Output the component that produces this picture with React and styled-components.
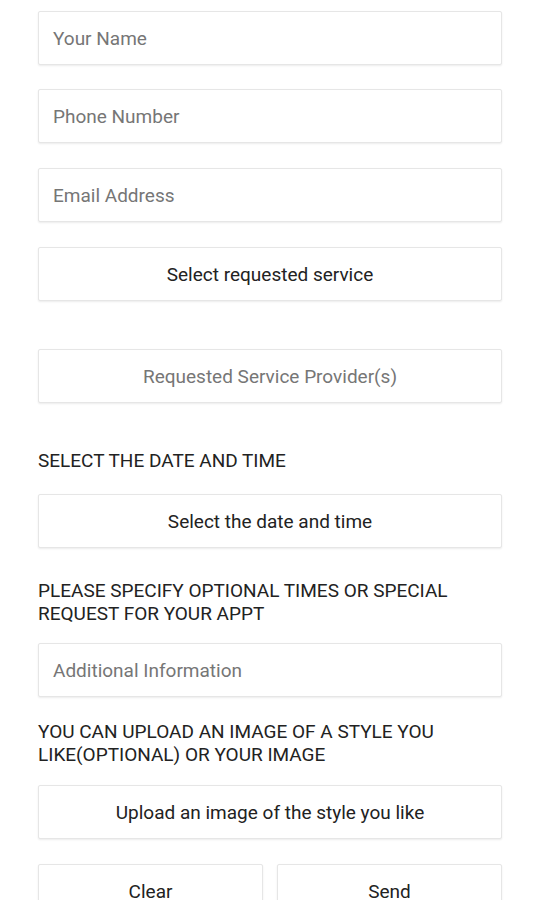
import React from "react";
import styled, { createGlobalStyle } from "styled-components";

const Global = createGlobalStyle`
  html, body { margin: 0; padding: 0; background: #ffffff; }
  body { font-family: Roboto, "Noto Sans", Arial, sans-serif; }
  * { box-sizing: border-box; }
`;

const Page = styled.div`
  width: 540px;
  height: 900px;
  overflow: hidden;
  padding: 11px 38px 0 38px;
  display: flex;
  flex-direction: column;
`;

const Field = styled.div`
  height: 54px;
  flex: ${(p) => (p.$grow ? "1" : "none")};
  margin-top: ${(p) => p.$mt || 0}px;
  border: 1px solid #e6e6e6;
  border-radius: 2px;
  box-shadow: 0 1px 2px rgba(0, 0, 0, 0.08);
  background: #fff;
  display: flex;
  align-items: center;
  justify-content: ${(p) => (p.$center ? "center" : "flex-start")};
  padding: 0 14px;
  font-size: 19px;
  color: ${(p) => (p.$muted ? "#767676" : "#222222")};
`;

const Label = styled.div`
  margin-top: ${(p) => p.$mt}px;
  margin-bottom: ${(p) => p.$mb}px;
  font-size: 19px;
  line-height: 23px;
  color: #222222;
  text-transform: uppercase;
`;

const ButtonRow = styled.div`
  display: flex;
  gap: 14px;
  margin-top: 25px;
`;

export default function App() {
  return (
    <>
      <Global />
      <Page>
        <Field $muted>Your Name</Field>
        <Field $muted $mt={24}>Phone Number</Field>
        <Field $muted $mt={25}>Email Address</Field>
        <Field $center $mt={25}>Select requested service</Field>
        <Field $center $muted $mt={48}>Requested Service Provider(s)</Field>
        <Label $mt={46} $mb={22}>Select the date and time</Label>
        <Field $center>Select the date and time</Field>
        <Label $mt={31} $mb={18}>
          Please specify optional times or special request for your appt
        </Label>
        <Field $muted>Additional Information</Field>
        <Label $mt={23} $mb={19}>
          You can upload an image of a style you like(optional) or your image
        </Label>
        <Field $center>Upload an image of the style you like</Field>
        <ButtonRow>
          <Field $center $grow>Clear</Field>
          <Field $center $grow>Send</Field>
        </ButtonRow>
      </Page>
    </>
  );
}
